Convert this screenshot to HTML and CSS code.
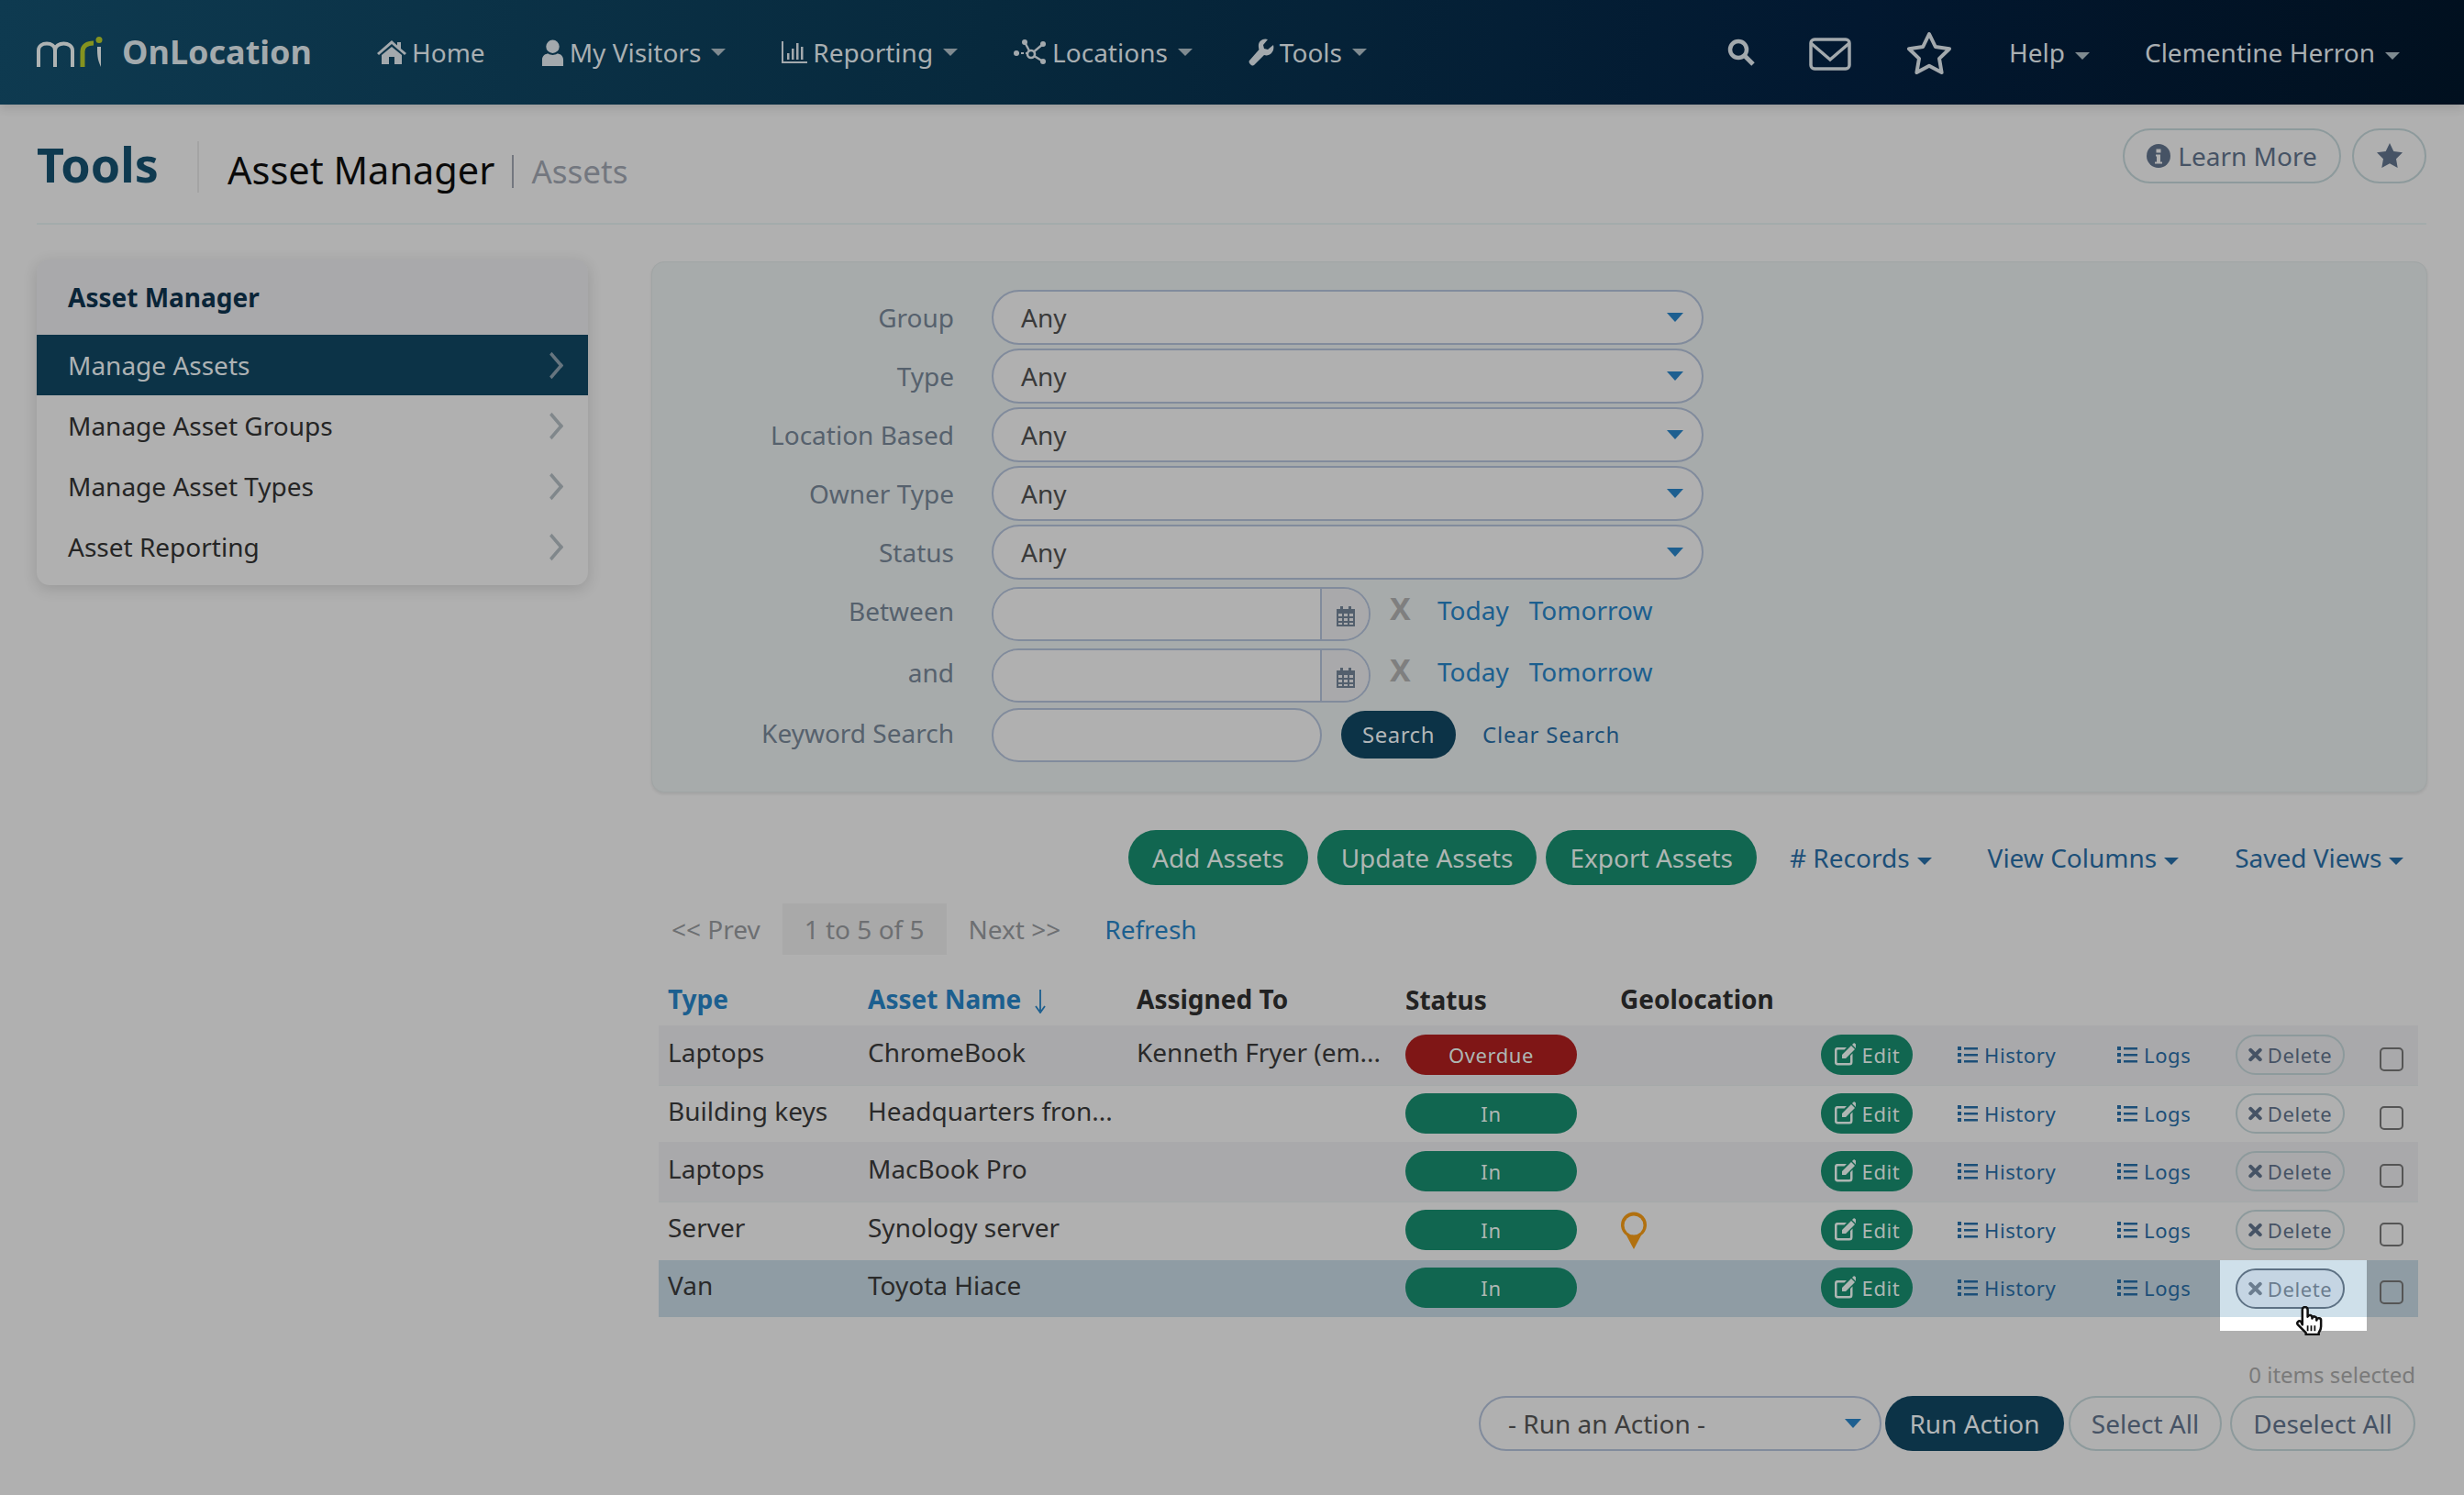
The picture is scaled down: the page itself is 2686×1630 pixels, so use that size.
FILE: index.html
```html
<!doctype html>
<html>
<head>
<meta charset="utf-8">
<title>Asset Manager</title>
<link rel="stylesheet" href="styles.css">
</head>
<body>
<svg class="defs" width="0" height="0">
  <symbol id="i-list" viewBox="0 0 22 18"><path d="M0 0h4v4H0zM0 7h4v4H0zM0 14h4v4H0zM7 1h15v2.400H7zM7 8h15v2.400H7zM7 15h15v2.400H7z"/></symbol>
  <symbol id="i-edit" viewBox="0 0 24 26"><path d="M3 5h11l-2.500 2.500H4.500a1 1 0 0 0-1 1V21a1 1 0 0 0 1 1h12.500a1 1 0 0 0 1-1v-7l2.500-2.500V21a3.500 3.500 0 0 1-3.500 3.500H4A3 3 0 0 1 1 21V8a3 3 0 0 1 2-3zM9 13L19 3l4 4-10 10H9zM20 2l1.500-1.500a1 1 0 0 1 1.400 0l1 1a1 1 0 0 1 0 1.400L24 6z"/></symbol>
  <symbol id="i-x" viewBox="0 0 16 16"><path d="M2.500 2.500l11 11M13.500 2.500l-11 11" fill="none" stroke="currentColor" stroke-width="4.400" stroke-linecap="round"/></symbol>
</svg>

<nav class="topbar">
  <a class="brand">
    <svg class="logo" viewBox="0 0 72 34" width="72" height="34">
      <path d="M2 33V15c0-10 18-10 18 0v18M20 15c0-10 19-10 19 0v18" fill="none" stroke="#aeb3b3" stroke-width="4"/>
      <path d="M50 33V16c0-6 5-9 12-9" fill="none" stroke="#85931f" stroke-width="5"/>
      <circle cx="68" cy="3.500" r="3.500" fill="#85931f"/>
      <path d="M66 11c0 8 0 14 4 22V11z" fill="#aeb3b3"/>
    </svg>
    <span>OnLocation</span>
  </a>
  <ul class="menu">
    <li><svg class="ni" viewBox="0 0 32 28" width="32" height="28"><path d="M16 1L0 15l2 2 14-12 14 12 2-2-6-5V3h-4v3.500zM5 17l11-9 11 9v10h-8v-8h-6v8H5z"/></svg>Home</li>
    <li class="drop"><svg class="ni" viewBox="0 0 26 30" width="25" height="29"><circle cx="13" cy="8" r="7.500"/><path d="M1 30v-7c0-5 4-7 7-7 3 2 7 2 10 0 3 0 7 2 7 7v7z"/></svg>My Visitors</li>
    <li class="drop"><svg class="ni" viewBox="0 0 28 24" width="28" height="24"><path d="M0 0h2v22h26v2H0zM6 13h2.500v7H6zM11 8h2.500v12H11zM16 2h2.500v18H16zM21 6h2.500v14H21z"/></svg>Reporting</li>
    <li class="drop"><svg class="ni" viewBox="0 0 36 28" width="36" height="28"><path d="M12 3l7 13 13-11M19 16l13 8" fill="none" stroke="#a3a9ad" stroke-width="2.400"/><path d="M3 15h16" stroke="#a3a9ad" stroke-width="2" stroke-dasharray="3 2"/><circle cx="3" cy="15" r="3"/><circle cx="12" cy="3" r="3"/><circle cx="32" cy="5" r="3"/><circle cx="32" cy="24" r="3"/><circle cx="19" cy="16" r="4" fill="#06283c" stroke="#a3a9ad" stroke-width="2.600"/></svg>Locations</li>
    <li class="drop"><svg class="ni" viewBox="0 0 28 30" width="28" height="30"><path d="M27 7l-6 5-4-1-1-4 5-6c-5-2-11 2-10 8 0 1 0 2 .5 3L1 24c-2 2 3 7 5 5l11-11c6 2 12-4 10-11z"/></svg>Tools</li>
  </ul>
  <div class="nav-right">
    <svg class="search-i" viewBox="0 0 30 30" width="30" height="30"><circle cx="12" cy="12" r="9" fill="none" stroke="#a3a9ad" stroke-width="4.500"/><path d="M18.500 18.500L28 28" stroke="#a3a9ad" stroke-width="5"/></svg>
    <svg class="mail-i" viewBox="0 0 46 36" width="46" height="36"><rect x="2" y="2" width="42" height="32" rx="4" fill="none" stroke="#a3a9ad" stroke-width="3.500"/><path d="M2 6l21 18L44 6" fill="none" stroke="#a3a9ad" stroke-width="3.500"/></svg>
    <svg class="star-i" viewBox="0 0 50 47" width="50" height="47"><path d="M25 3l6.800 14 15.200 2.200-11 10.700 2.600 15.100L25 37.800 11.400 45 14 29.900 3 19.200 18.200 17z" fill="none" stroke="#a3a9ad" stroke-width="4" stroke-linejoin="round"/></svg>
    <span class="drop help">Help</span>
    <span class="drop">Clementine Herron</span>
  </div>
</nav>

<main class="page">
  <header class="page-head">
    <h1>Tools</h1>
    <h2>Asset Manager</h2>
    <span class="sub">Assets</span>
    <div class="head-btns">
      <a class="btn-line learn"><svg viewBox="0 0 26 26" width="26" height="26"><circle cx="13" cy="13" r="13" fill="#465365"/><path d="M10.500 5.500h5v4h-5zM10 11.500h5v8h2v2H9v-2h2v-6h-1z" fill="#b0b0b0"/></svg>Learn More</a>
      <a class="btn-line fav"><svg viewBox="0 0 28 27" width="28" height="27"><path d="M14 0l4.300 9 9.700 1.300-7 6.900 1.700 9.800L14 22.300 5.300 27 7 17.200 0 10.300 9.700 9z" fill="#465365"/></svg></a>
    </div>
  </header>

  <div class="columns">
    <aside class="side">
      <h3>Asset Manager</h3>
      <a class="side-item active">Manage Assets</a>
      <a class="side-item">Manage Asset Groups</a>
      <a class="side-item">Manage Asset Types</a>
      <a class="side-item">Asset Reporting</a>
    </aside>

    <section class="content">
      <form class="filters">
        <div class="f-row"><label>Group</label><div class="select">Any</div></div>
        <div class="f-row"><label>Type</label><div class="select">Any</div></div>
        <div class="f-row"><label>Location Based</label><div class="select">Any</div></div>
        <div class="f-row"><label>Owner Type</label><div class="select">Any</div></div>
        <div class="f-row"><label>Status</label><div class="select">Any</div></div>
        <div class="f-row date first"><label>Between</label>
          <div class="date-box"><div class="date-input"></div><div class="date-add"><svg viewBox="0 0 20 22" width="20" height="22"><path d="M4 0h3v3h6V0h3v3h4v19H0V3h4zM2 8v3h4V8zm6 0v3h4V8zm6 0v3h4V8zM2 13v3h4v-3zm6 0v3h4v-3zm6 0v3h4v-3zM2 18v2h4v-2zm6 0v2h4v-2zm6 0v2h4v-2z" fill="#535f6d"/></svg></div></div>
          <b class="clear-x">X</b><a class="lnk today">Today</a><a class="lnk">Tomorrow</a>
        </div>
        <div class="f-row date"><label>and</label>
          <div class="date-box"><div class="date-input"></div><div class="date-add"><svg viewBox="0 0 20 22" width="20" height="22"><path d="M4 0h3v3h6V0h3v3h4v19H0V3h4zM2 8v3h4V8zm6 0v3h4V8zm6 0v3h4V8zM2 13v3h4v-3zm6 0v3h4v-3zm6 0v3h4v-3zM2 18v2h4v-2zm6 0v2h4v-2zm6 0v2h4v-2z" fill="#535f6d"/></svg></div></div>
          <b class="clear-x">X</b><a class="lnk today">Today</a><a class="lnk">Tomorrow</a>
        </div>
        <div class="f-row kw"><label>Keyword Search</label><div class="kw-input"></div><a class="btn-search">Search</a><a class="clear-search">Clear Search</a></div>
      </form>

      <div class="toolbar">
        <a class="btn-green">Add Assets</a>
        <a class="btn-green">Update Assets</a>
        <a class="btn-green">Export Assets</a>
        <a class="tool-drop rec">&#35; Records</a>
        <a class="tool-drop cols">View Columns</a>
        <a class="tool-drop views">Saved Views</a>
      </div>

      <div class="pager">
        <span class="muted">&lt;&lt; Prev</span>
        <span class="count">1 to 5 of 5</span>
        <span class="muted">Next &gt;&gt;</span>
        <a class="lnk refresh">Refresh</a>
      </div>

      <div class="grid">
        <div class="row head">
          <div class="c-type"><a class="lnk">Type</a></div>
          <div class="c-name"><a class="lnk">Asset Name <svg viewBox="0 0 12 26" width="12" height="26"><path d="M6 0v23M1 18l5 7 5-7" fill="none" stroke="#1c5f8f" stroke-width="1.800"/></svg></a></div>
          <div class="c-to">Assigned To</div>
          <div class="c-status">Status</div>
          <div class="c-geo">Geolocation</div>
        </div>

        <div class="row shade">
          <div class="c-type">Laptops</div><div class="c-name">ChromeBook</div><div class="c-to">Kenneth Fryer (em...</div>
          <div class="c-status"><span class="pill red">Overdue</span></div><div class="c-geo"></div>
          <div class="c-edit"><a class="btn-edit"><svg><use href="#i-edit"/></svg>Edit</a></div>
          <div class="c-hist"><a class="act"><svg><use href="#i-list"/></svg>History</a></div>
          <div class="c-logs"><a class="act"><svg><use href="#i-list"/></svg>Logs</a></div>
          <div class="c-del"><a class="btn-del"><svg><use href="#i-x"/></svg>Delete</a></div>
          <div class="c-chk"><span class="chk"></span></div>
        </div>
        <div class="row plain">
          <div class="c-type">Building keys</div><div class="c-name">Headquarters fron...</div><div class="c-to"></div>
          <div class="c-status"><span class="pill">In</span></div><div class="c-geo"></div>
          <div class="c-edit"><a class="btn-edit"><svg><use href="#i-edit"/></svg>Edit</a></div>
          <div class="c-hist"><a class="act"><svg><use href="#i-list"/></svg>History</a></div>
          <div class="c-logs"><a class="act"><svg><use href="#i-list"/></svg>Logs</a></div>
          <div class="c-del"><a class="btn-del"><svg><use href="#i-x"/></svg>Delete</a></div>
          <div class="c-chk"><span class="chk"></span></div>
        </div>
        <div class="row shade">
          <div class="c-type">Laptops</div><div class="c-name">MacBook Pro</div><div class="c-to"></div>
          <div class="c-status"><span class="pill">In</span></div><div class="c-geo"></div>
          <div class="c-edit"><a class="btn-edit"><svg><use href="#i-edit"/></svg>Edit</a></div>
          <div class="c-hist"><a class="act"><svg><use href="#i-list"/></svg>History</a></div>
          <div class="c-logs"><a class="act"><svg><use href="#i-list"/></svg>Logs</a></div>
          <div class="c-del"><a class="btn-del"><svg><use href="#i-x"/></svg>Delete</a></div>
          <div class="c-chk"><span class="chk"></span></div>
        </div>
        <div class="row plain">
          <div class="c-type">Server</div><div class="c-name">Synology server</div><div class="c-to"></div>
          <div class="c-status"><span class="pill">In</span></div>
          <div class="c-geo"><svg class="pin" viewBox="0 0 30 41" width="30" height="41"><path d="M15 41L7 26A14 14 0 1 1 23 26z" fill="#b1700f"/><circle cx="15" cy="15" r="10.500" fill="#b0b0b0"/></svg></div>
          <div class="c-edit"><a class="btn-edit"><svg><use href="#i-edit"/></svg>Edit</a></div>
          <div class="c-hist"><a class="act"><svg><use href="#i-list"/></svg>History</a></div>
          <div class="c-logs"><a class="act"><svg><use href="#i-list"/></svg>Logs</a></div>
          <div class="c-del"><a class="btn-del"><svg><use href="#i-x"/></svg>Delete</a></div>
          <div class="c-chk"><span class="chk"></span></div>
        </div>
        <div class="row hover">
          <div class="c-type">Van</div><div class="c-name">Toyota Hiace</div><div class="c-to"></div>
          <div class="c-status"><span class="pill">In</span></div><div class="c-geo"></div>
          <div class="c-edit"><a class="btn-edit"><svg><use href="#i-edit"/></svg>Edit</a></div>
          <div class="c-hist"><a class="act"><svg><use href="#i-list"/></svg>History</a></div>
          <div class="c-logs"><a class="act"><svg><use href="#i-list"/></svg>Logs</a></div>
          <div class="c-del spot"><a class="btn-del"><svg><use href="#i-x"/></svg>Delete</a></div>
          <div class="c-chk"><span class="chk"></span></div>
          <div class="spot-foot"></div>
          <svg class="hand" viewBox="0 0 32 33" width="31" height="32"><path d="M7 21V4a3 3 0 0 1 6 0v8a2.600 2.600 0 0 1 5 .5V14a2.500 2.500 0 0 1 5 .5V16a2.400 2.400 0 0 1 5 .5V23c0 3-1 5-2.500 7v2H11v-2L2 21c-2-2.500 1-5.500 3.500-3.500z" fill="#fff" stroke="#111" stroke-width="2.600" stroke-linejoin="round"/><path d="M13 22v6M17 22v6M21 22v6" stroke="#111" stroke-width="1.800"/></svg>
        </div>
      </div>

      <div class="selected">0 items selected</div>
      <div class="bulk">
        <div class="select action">- Run an Action -</div>
        <a class="btn-run">Run Action</a>
        <a class="btn-line sel-all">Select All</a>
        <a class="btn-line desel">Deselect All</a>
      </div>
    </section>
  </div>
</main>
</body>
</html>
```

FILE: styles.css
```css
*{
    box-sizing:border-box;
}
html,body{
    margin:0;
    padding:0;
}
body{
    width:2686px;
    height:1630px;
    overflow:hidden;
    background:#b0b0b0;
    font-family:"Noto Sans","Open Sans","Liberation Sans",sans-serif;
    font-size:28px;
    line-height:40px;
    color:#2a2a2a;
}
a{
    text-decoration:none;
}
ul{
    margin:0;
    padding:0;
    list-style:none;
}
.defs{
    display:block;
    height:0;
}

/* top bar */
.topbar{
    height:114px;
    display:flex;
    align-items:center;
    padding:0 40px;
    background:linear-gradient(100deg,#0e3a50 0%,#07293d 40%,#021830 75%,#01101f 100%);
    color:#a9afb2;
    box-shadow:0 4px 10px rgba(0,0,0,.12);
}
.brand{
    display:flex;
    align-items:center;
    width:371px;
    font-size:36px;
    font-weight:700;
    color:#a3aaad;
}
.logo{
    margin-right:21px;
}
.menu{
    display:flex;
    align-items:center;
}
.menu li{
    display:flex;
    align-items:center;
    margin-right:39px;
}
.menu li:first-child{
    margin-right:61px;
}
.ni{
    fill:#a3a9ad;
    margin-right:6px;
}
.drop::after{
    content:"";
    display:inline-block;
    margin-left:11px;
    vertical-align:middle;
    border-top:8px solid #7f8a90;
    border-left:8px solid transparent;
    border-right:8px solid transparent;
}
.menu .drop::after{
    margin-left:11px;
    margin-right:22px;
}
.menu .drop:last-child::after{
    margin-right:0;
}
.nav-right{
    margin-left:auto;
    display:flex;
    align-items:center;
    padding-right:30px;
}
.search-i{
    margin-right:59px;
}
.mail-i{
    margin-top:3px;
    margin-right:60px;
}
.star-i{
    margin-right:62px;
}
.help{
    margin-right:60px;
}

/* page */
.page{
    padding:0 41px 0 40px;
}
.page-head{
    height:131px;
    display:flex;
    align-items:center;
    border-bottom:2px solid #a3abab;
    padding-top:6px;
}
.page-head h1{
    margin:0;
    width:177px;
    height:56px;
    line-height:50px;
    font-size:52px;
    font-weight:700;
    color:#0f3a50;
    border-right:2px solid #a4a4a4;
}
.page-head h2{
    margin:6px 0 0 31px;
    font-size:41.5px;
    font-weight:400;
    color:#0a0a0a;
    line-height:56px;
}
.sub{
    margin-left:19px;
    padding-left:19px;
    font-size:35px;
    line-height:36px;
    color:#73777f;
    border-left:2px solid #73777f;
    margin-top:10px;
}
.head-btns{
    margin-left:auto;
    margin-top:-24px;
    display:flex;
    gap:12px;
}
.btn-line{
    height:60px;
    display:inline-flex;
    align-items:center;
    justify-content:center;
    border:2px solid #8d9a9c;
    border-radius:30px;
    color:#465365;
}
.learn{
    width:238px;
    gap:8px;
}
.fav{
    width:81px;
}

.columns{
    display:flex;
    padding-top:38px;
}
.side{
    width:601px;
    height:355px;
    margin-right:68px;
    flex:none;
    padding-bottom:8px;
    background:#b0b0b0;
    border-radius:14px;
    box-shadow:0 4px 16px rgba(0,0,0,.14);
    overflow:hidden;
}
.side h3{
    margin:0;
    height:82px;
    padding:21px 34px 0;
    font-size:28px;
    line-height:40px;
    font-weight:700;
    color:#0a2538;
    background:#a9a9ab;
}
.side-item{
    position:relative;
    display:block;
    height:66px;
    line-height:66px;
    padding-left:34px;
    color:#252525;
}
.side-item::after{
    content:"";
    position:absolute;
    right:29px;
    top:23px;
    width:17px;
    height:17px;
    border-top:4px solid #80878b;
    border-right:4px solid #80878b;
    transform:scaleX(.85) rotate(45deg);
}
.side-item.active{
    background:#0c3347;
    color:#adb2b4;
}
.side-item.active::after{
    border-color:#66757f;
}

.content{
    width:1936px;
    flex:none;
    margin-left:1px;
}
.filters{
    height:579px;
    margin-top:2px;
    padding-top:30px;
    background:#a7abab;
    border:1px solid #a0a5a5;
    border-radius:14px;
    box-shadow:0 2px 3px rgba(0,0,0,.08);
}
.f-row{
    display:flex;
    align-items:center;
    height:60px;
    margin-bottom:4px;
}
.f-row label{
    width:329px;
    text-align:right;
    margin-right:41px;
    color:#56616d;
}
.select{
    position:relative;
    width:776px;
    height:60px;
    line-height:56px;
    padding-left:30px;
    background:#b0b0b0;
    border:2px solid #818b9c;
    border-radius:30px;
    color:#3a3a3a;
}
.select::after{
    content:"";
    position:absolute;
    right:20px;
    top:23px;
    border-top:10px solid #1d5f90;
    border-left:9px solid transparent;
    border-right:9px solid transparent;
}
.date{
    height:60px;
    margin-bottom:7px;
}
.date.first{
    margin-top:7px;
}
.date label{
    position:relative;
    top:-3px;
}
.date-box{
    display:flex;
    width:413px;
    height:59px;
    border:2px solid #818b9c;
    border-radius:30px;
    overflow:hidden;
}
.date-input{
    width:358px;
    background:#b0b0b0;
    border-right:2px solid #818b9c;
}
.date-add{
    flex:1;
    display:flex;
    align-items:center;
    justify-content:center;
    padding-top:6px;
    background:#a9a9ab;
}
.clear-x{
    margin-left:21px;
    width:52px;
    font-size:34px;
    line-height:40px;
    color:#7f7f7f;
    position:relative;
    top:-6px;
}
.lnk{
    color:#1c5f8f;
}
.date .lnk{
    position:relative;
    top:-4px;
    margin-left:22px;
}
.date .lnk.today{
    margin-left:0;
    margin-right:0;
}
.kw{
    margin-top:-2px;
}
.kw label{
    position:relative;
    top:-2px;
}
.kw-input{
    width:360px;
    height:59px;
    background:#b0b0b0;
    border:2px solid #818b9c;
    border-radius:30px;
}
.btn-search{
    margin-left:21px;
    width:125px;
    height:52px;
    line-height:52px;
    text-align:center;
    font-size:24px;
    letter-spacing:.5px;
    background:#0c3347;
    color:#b2b6b8;
    border-radius:26px;
}
.clear-search{
    margin-left:29px;
    font-size:24px;
    letter-spacing:.8px;
    color:#1c4f78;
}

.toolbar{
    display:flex;
    align-items:center;
    height:60px;
    margin-top:41px;
    padding-left:520px;
}
.btn-green{
    height:60px;
    line-height:60px;
    padding:0 26px;
    margin-right:10px;
    background:#116650;
    color:#aeb6b3;
    border-radius:30px;
}
.tool-drop{
    color:#1c4f78;
}
.tool-drop::after{
    content:"";
    display:inline-block;
    margin-left:8px;
    vertical-align:middle;
    border-top:8px solid #1c4f78;
    border-left:8px solid transparent;
    border-right:8px solid transparent;
}
.rec{
    margin-left:26px;
}
.cols{
    margin-left:61px;
}
.views{
    margin-left:61px;
}

.pager{
    display:flex;
    align-items:center;
    height:56px;
    margin-top:20px;
    padding-left:22px;
    color:#6d6f72;
}
.count{
    margin:0 24px;
    padding:0 24px;
    height:56px;
    line-height:56px;
    background:#a9a9a9;
}
.refresh{
    margin-left:48px;
}

.grid{
    margin-top:29px;
    margin-left:8px;
    width:1918px;
}
.row{
    position:relative;
    display:flex;
    align-items:center;
}
.row.head{
    height:48px;
    font-weight:700;
    color:#222;
    padding-bottom:10px;
}
.row.shade{
    height:66px;
    background:#a9a9ab;
    border-bottom:1px solid #a5a9a9;
}
.row.plain{
    height:61px;
}
.row.hover{
    height:62px;
    margin-top:2px;
    background:#8f9ca4;
}
.c-type{
    width:228px;
    padding-left:10px;
}
.c-name{
    width:293px;
}
.c-to{
    width:293px;
    white-space:nowrap;
}
.c-status{
    width:234px;
    padding-top:2px;
}
.c-geo{
    width:219px;
}
.c-edit{
    width:149px;
}
.c-hist{
    width:174px;
}
.c-logs{
    width:129px;
}
.c-del{
    width:157px;
}
.c-chk{
    width:42px;
}
.row.head .c-name svg{
    vertical-align:middle;
    margin-left:8px;
}
.row.shade > div,
.row.plain > div,
.row.hover > div{
    margin-top:-8px;
}
.pill{
    display:block;
    width:187px;
    height:44px;
    line-height:44px;
    text-align:center;
    font-size:22px;
    letter-spacing:.6px;
    background:#116650;
    color:#aeb6b3;
    border-radius:22px;
    position:relative;
    top:2px;
}
.pill.red{
    background:#7f1616;
}
.btn-edit,
.btn-del,
.act{
    display:inline-flex;
    align-items:center;
    font-size:22px;
    letter-spacing:.6px;
    position:relative;
    top:3px;
}
.act{
    top:2px;
}
.btn-edit{
    width:100px;
    height:44px;
    justify-content:center;
    gap:7px;
    background:#116650;
    color:#aeb6b3;
    border-radius:22px;
}
.btn-edit svg{
    width:24px;
    height:26px;
    fill:#aeb6b3;
}
.act{
    color:#1c4f78;
    gap:7px;
}
.act svg{
    width:22px;
    height:18px;
    fill:#1c4f78;
}
.btn-del{
    width:119px;
    height:44px;
    justify-content:center;
    gap:6px;
    border:2px solid #8d9a9c;
    border-radius:22px;
    color:#465365;
}
.btn-del svg{
    width:15px;
    height:16px;
}
.chk{
    display:block;
    width:26px;
    height:26px;
    border:2px solid #555;
    border-radius:5px;
    position:relative;
    top:8px;
}
.pin{
    display:block;
    position:relative;
    top:4px;
}
/* lit part of the hovered row */
.spot{
    position:relative;
    height:62px;
    display:flex;
    align-items:center;
    background:#cfe0ea;
    margin-left:-17px;
    padding-left:17px;
    width:160px;
    margin-right:14px;
    z-index:1;
}
.row.hover > .spot{
    margin-top:0;
}
.spot .btn-del{
    top:0;
    border-color:#5d7184;
    background:#c5d5e3;
    color:#6b7d8f;
}
.spot-foot{
    position:absolute;
    left:1702px;
    top:62px;
    width:160px;
    height:23px;
    background:#fff;
}
.hand{
    position:absolute;
    left:1785px;
    top:50px;
    z-index:2;
}

.selected{
    margin-top:45px;
    width:1923px;
    text-align:right;
    font-size:24px;
    line-height:36px;
    color:#7a7a7a;
}
.bulk{
    display:flex;
    align-items:center;
    height:60px;
    margin-top:5px;
    padding-left:902px;
}
.select.action{
    width:439px;
    color:#3d3d3d;
}
.btn-run{
    margin-left:4px;
    width:195px;
    height:60px;
    line-height:60px;
    text-align:center;
    background:#0c3347;
    color:#b2b6b8;
    border-radius:30px;
}
.sel-all{
    margin-left:5px;
    width:167px;
}
.desel{
    margin-left:9px;
    width:202px;
}
```
